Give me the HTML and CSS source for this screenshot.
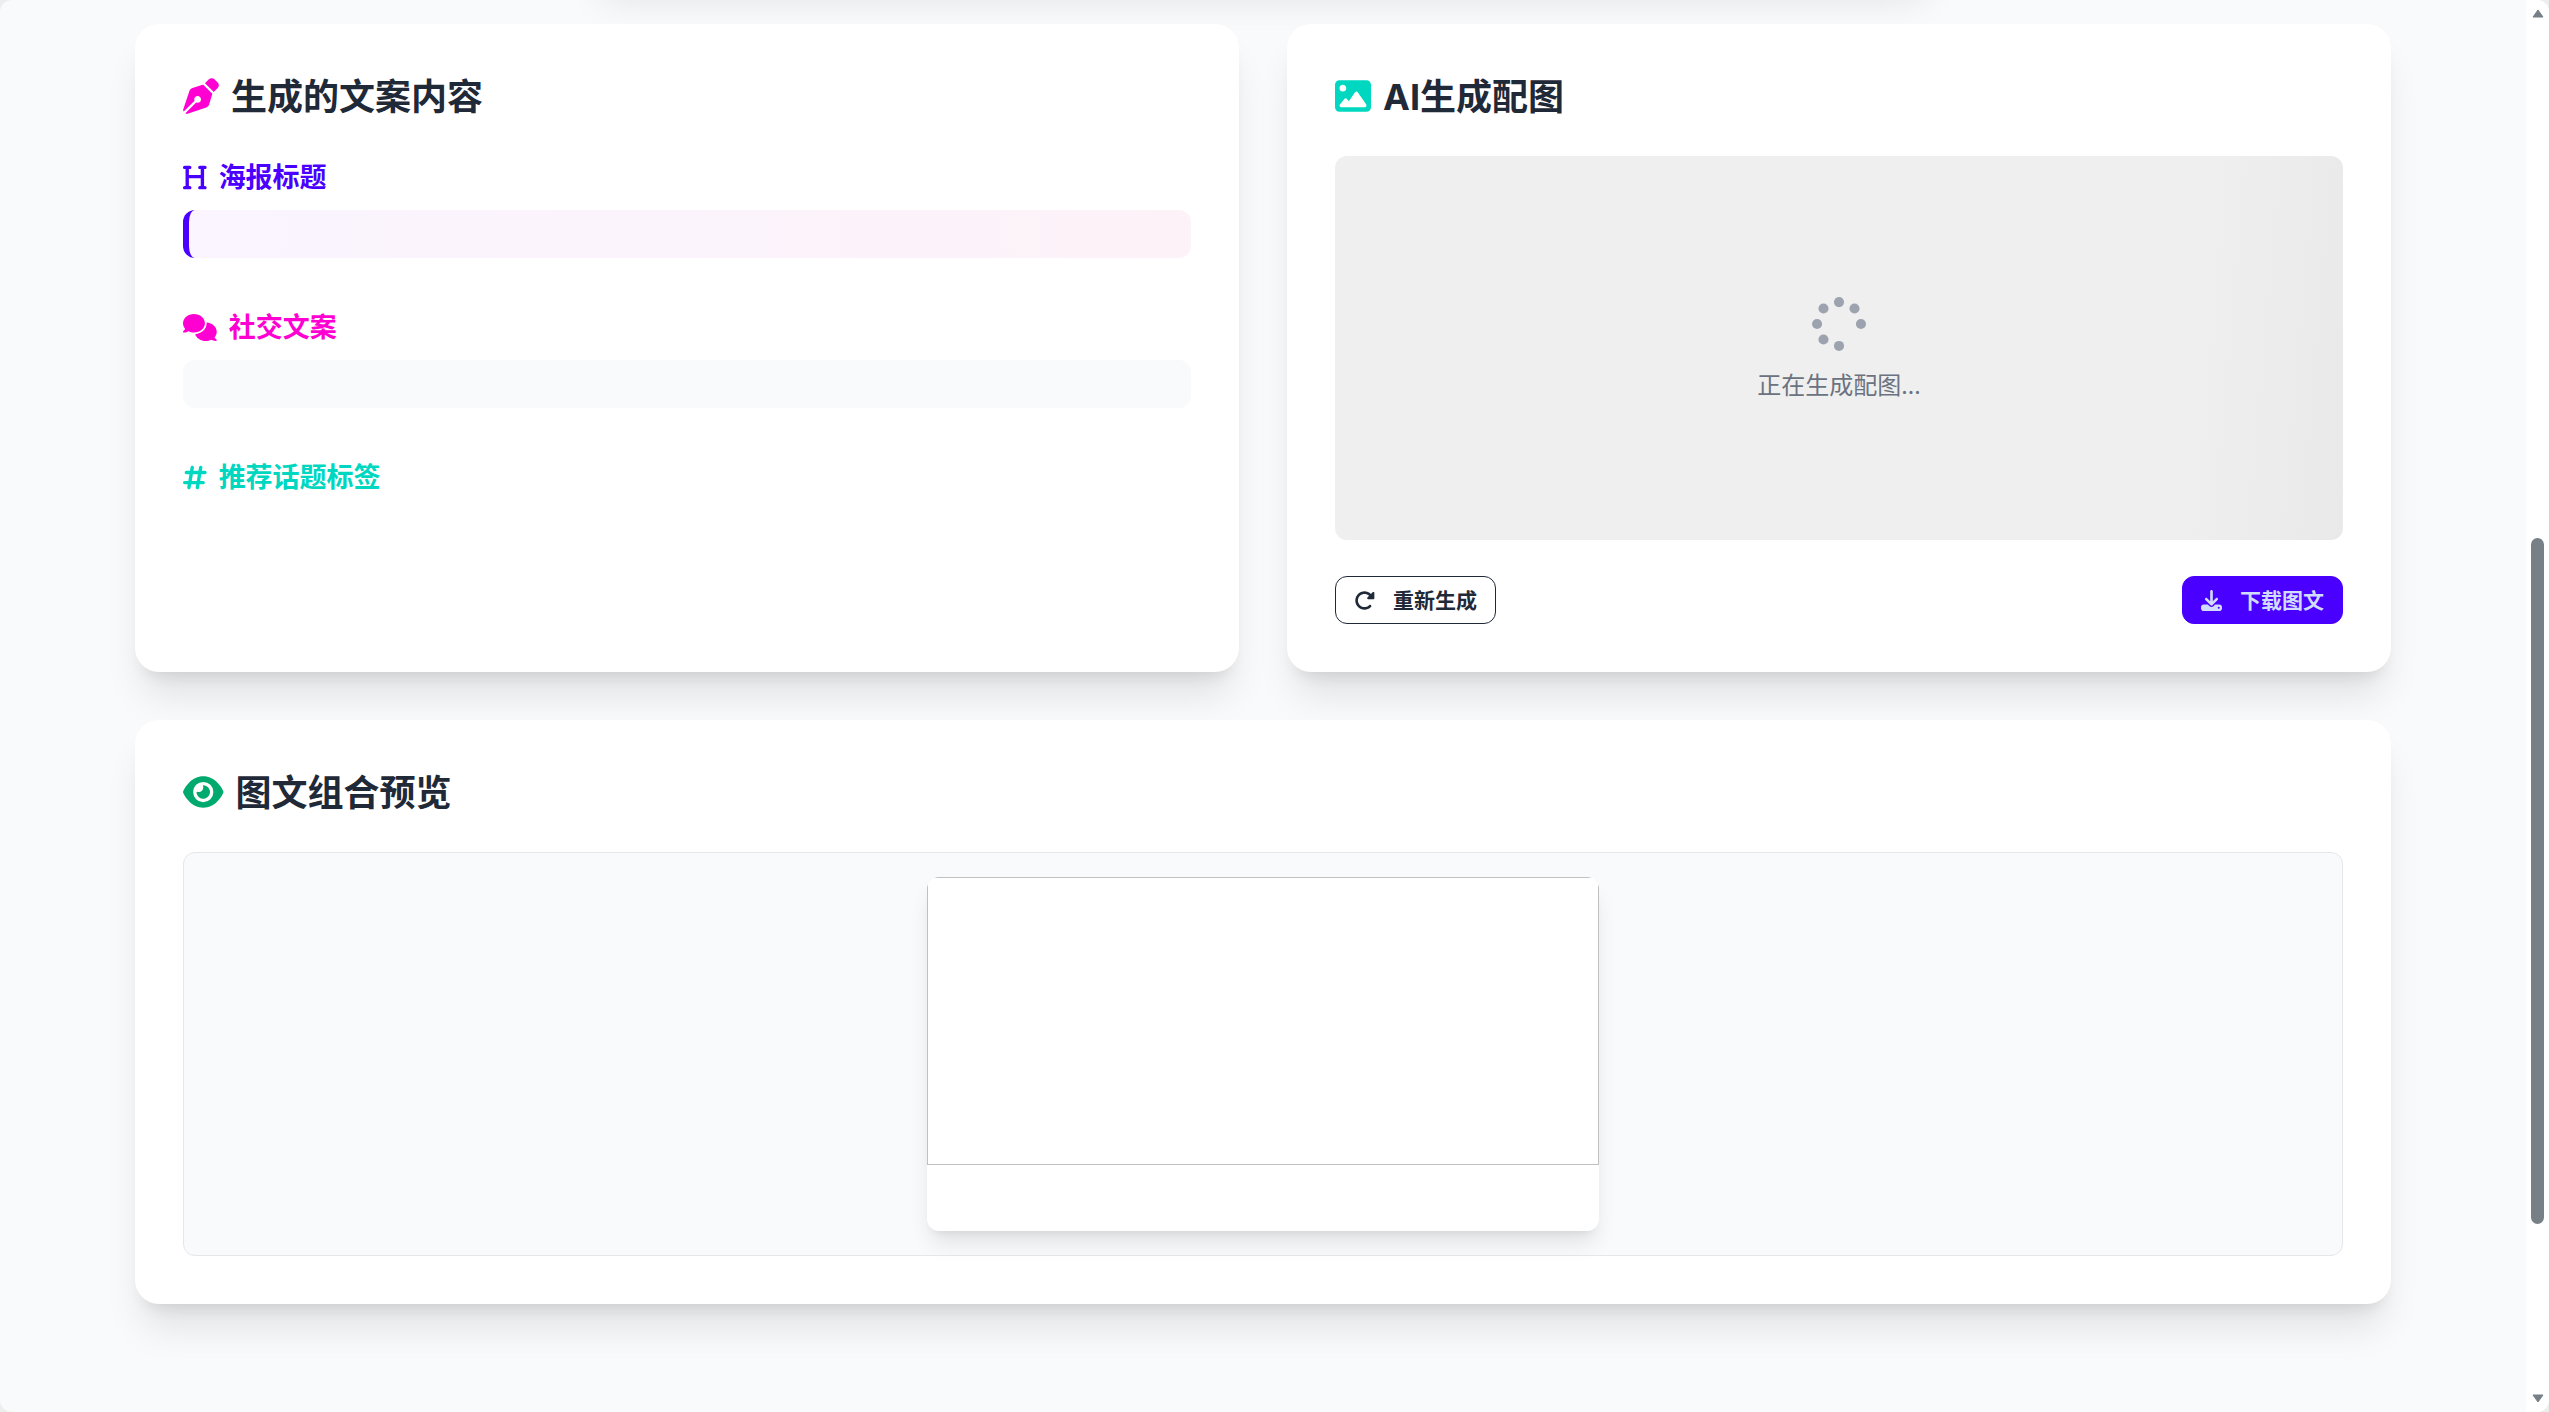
FILE: index.html
```html
<!DOCTYPE html>
<html lang="zh-CN">
<head>
<meta charset="utf-8">
<meta name="viewport" content="width=device-width, initial-scale=1">
<title>AI 图文生成</title>
<link rel="stylesheet" href="styles.css">
</head>
<body>
<div class="window">
  <main class="page">
    <div class="container">
      <div class="form-card"></div>
      <div class="results">
        <section class="card">
          <h2 class="card-title">
            <svg class="icon pink" viewBox="0 0 512 512" aria-hidden="true"><path d="M368.4 18.3L312.7 74.1 437.9 199.3l55.7-55.7c21.9-21.9 21.9-57.3 0-79.2L447.6 18.3c-21.9-21.9-57.3-21.9-79.2 0zM288 94.6l-9.2 2.8L134.7 140.6c-19.9 6-35.7 21.2-42.3 41L3.8 445.8c-3.8 11.3-1 23.9 7.3 32.4L164.7 324.7c-3-6.3-4.7-13.3-4.7-20.7c0-26.5 21.5-48 48-48s48 21.5 48 48s-21.5 48-48 48c-7.4 0-14.4-1.7-20.7-4.7L33.7 500.9c8.6 8.3 21.1 11.2 32.4 7.3l264.3-88.6c19.7-6.6 35-22.4 41-42.3l43.2-144.1 2.7-9.2L288 94.6z"/></svg>
            <span>生成的文案内容</span>
          </h2>
          <div class="block">
            <h3 class="block-title purple">
              <svg class="icon" viewBox="0 0 448 512" aria-hidden="true"><path d="M0 64C0 46.3 14.3 32 32 32H80h48c17.7 0 32 14.3 32 32s-14.3 32-32 32H112V208H336V96H320c-17.7 0-32-14.3-32-32s14.3-32 32-32h48 48c17.7 0 32 14.3 32 32s-14.3 32-32 32H400V240 416h16c17.7 0 32 14.3 32 32s-14.3 32-32 32H368 320c-17.7 0-32-14.3-32-32s14.3-32 32-32h16V272H112V416h16c17.7 0 32 14.3 32 32s-14.3 32-32 32H80 32c-17.7 0-32-14.3-32-32s14.3-32 32-32H48V240 96H32C14.3 96 0 81.7 0 64z"/></svg>
              <span>海报标题</span>
            </h3>
            <div class="field field-title"></div>
          </div>
          <div class="block">
            <h3 class="block-title pink">
              <svg class="icon" viewBox="0 0 640 512" aria-hidden="true"><path d="M208 352c114.9 0 208-78.8 208-176S322.9 0 208 0S0 78.8 0 176c0 38.6 14.7 74.3 39.6 103.4c-3.5 9.4-8.7 17.7-14.2 24.7c-4.8 6.2-9.7 11-13.3 14.3c-1.8 1.6-3.3 2.9-4.3 3.7c-.5 .4-.9 .7-1.1 .8l-.2 .2C1 327.2-1.4 334.4 .8 340.9S9.1 352 16 352c21.8 0 43.8-5.6 62.1-12.5c9.2-3.5 17.8-7.4 25.2-11.4C134.1 343.3 169.8 352 208 352zM448 176c0 112.3-99.1 196.9-216.5 207C255.8 457.4 336.4 512 432 512c38.2 0 73.9-8.7 104.7-23.9c7.5 4 16 7.9 25.2 11.4c18.3 6.9 40.3 12.5 62.1 12.5c6.9 0 13.1-4.5 15.2-11.1c2.1-6.6-.2-13.8-5.8-17.9l-.2-.2c-.2-.2-.6-.4-1.1-.8c-1-.8-2.5-2-4.3-3.7c-3.6-3.3-8.5-8.1-13.3-14.3c-5.5-7-10.7-15.4-14.2-24.7c24.9-29 39.6-64.7 39.6-103.4c0-92.8-84.9-168.9-192.6-175.5c.4 5.1 .6 10.3 .6 15.5z"/></svg>
              <span>社交文案</span>
            </h3>
            <div class="field"></div>
          </div>
          <div class="block">
            <h3 class="block-title teal">
              <svg class="icon" viewBox="0 0 448 512" aria-hidden="true"><path d="M181.3 32.4c17.4 2.9 29.2 19.4 26.3 36.8L197.8 128h95.1l11.5-69.3c2.9-17.4 19.4-29.2 36.8-26.3s29.2 19.4 26.3 36.8L357.8 128H416c17.7 0 32 14.3 32 32s-14.3 32-32 32H347.1L325.8 320H384c17.7 0 32 14.3 32 32s-14.3 32-32 32H315.1l-11.5 69.3c-2.9 17.4-19.4 29.2-36.8 26.3s-29.2-19.4-26.3-36.8l9.8-58.7H155.1l-11.5 69.3c-2.9 17.4-19.4 29.2-36.8 26.3s-29.2-19.4-26.3-36.8L90.2 384H32c-17.7 0-32-14.3-32-32s14.3-32 32-32h68.9l21.3-128H64c-17.7 0-32-14.3-32-32s14.3-32 32-32h68.9l11.5-69.3c2.9-17.4 19.4-29.2 36.8-26.3zM187.1 192L165.8 320h95.1l21.3-128H187.1z"/></svg>
              <span>推荐话题标签</span>
            </h3>
          </div>
        </section>

        <section class="card">
          <h2 class="card-title">
            <svg class="icon teal" viewBox="0 0 512 512" aria-hidden="true"><path d="M0 96C0 60.7 28.7 32 64 32H448c35.3 0 64 28.7 64 64V416c0 35.3-28.7 64-64 64H64c-35.3 0-64-28.7-64-64V96zM323.8 202.5c-4.5-6.6-11.9-10.5-19.8-10.5s-15.4 3.9-19.8 10.5l-87 127.6L170.7 297c-4.6-5.7-11.5-9-18.7-9s-14.2 3.3-18.7 9l-64 80c-5.8 7.2-6.9 17.1-2.9 25.4s12.4 13.6 21.6 13.6h96 32H424c8.9 0 17.1-4.9 21.2-12.8s3.6-17.4-1.4-24.7l-120-176zM112 192c26.5 0 48-21.5 48-48s-21.5-48-48-48s-48 21.5-48 48s21.5 48 48 48z"/></svg>
            <span>AI生成配图</span>
          </h2>
          <div class="placeholder" role="status">
            <svg class="spinner" viewBox="0 0 512 512" aria-hidden="true"><circle cx="256" cy="48" r="48"/><circle cx="403" cy="109" r="48"/><circle cx="464" cy="256" r="48"/><circle cx="256" cy="464" r="48"/><circle cx="109" cy="403" r="48"/><circle cx="48" cy="256" r="48"/><circle cx="109" cy="109" r="48"/></svg>
            <p class="placeholder-text">正在生成配图...</p>
          </div>
          <div class="actions">
            <button type="button" class="btn btn-outline">
              <svg class="icon" viewBox="0 0 512 512" aria-hidden="true"><path d="M463.5 224H472c13.3 0 24-10.7 24-24V72c0-9.7-5.8-18.5-14.8-22.2s-19.3-1.7-26.2 5.2L413.4 96.6c-87.6-86.5-228.7-86.2-315.8 1c-87.5 87.5-87.5 229.3 0 316.8s229.3 87.5 316.8 0c12.5-12.5 12.5-32.8 0-45.3s-32.8-12.5-45.3 0c-62.5 62.5-163.8 62.5-226.3 0s-62.5-163.8 0-226.3c62.2-62.2 162.7-62.5 225.3-1L327 183c-6.9 6.9-8.9 17.2-5.2 26.2s12.5 14.8 22.2 14.8H463.5z"/></svg>
              <span>重新生成</span>
            </button>
            <button type="button" class="btn btn-primary">
              <svg class="icon" viewBox="0 0 512 512" aria-hidden="true"><path d="M288 32c0-17.7-14.3-32-32-32s-32 14.3-32 32V274.7l-73.4-73.4c-12.5-12.5-32.8-12.5-45.3 0s-12.5 32.8 0 45.3l128 128c12.5 12.5 32.8 12.5 45.3 0l128-128c12.5-12.5 12.5-32.8 0-45.3s-32.8-12.5-45.3 0L288 274.7V32zM64 352c-35.3 0-64 28.7-64 64v32c0 35.3 28.7 64 64 64H448c35.3 0 64-28.7 64-64V416c0-35.3-28.7-64-64-64H346.5l-45.3 45.3c-25 25-65.5 25-90.5 0L165.5 352H64zm368 56a24 24 0 1 1 0 48 24 24 0 1 1 0-48z"/></svg>
              <span>下载图文</span>
            </button>
          </div>
        </section>
      </div>

      <section class="card">
        <h2 class="card-title">
          <svg class="icon green" viewBox="0 0 576 512" aria-hidden="true"><path d="M288 32c-80.8 0-145.5 36.8-192.6 80.6C48.6 156 17.3 208 2.5 243.7c-3.3 7.9-3.3 16.7 0 24.6C17.3 304 48.6 356 95.4 399.4C142.5 443.2 207.2 480 288 480s145.5-36.8 192.6-80.6c46.8-43.5 78.1-95.4 93-131.1c3.3-7.9 3.3-16.7 0-24.6c-14.9-35.7-46.2-87.7-93-131.1C433.5 68.8 368.8 32 288 32zM144 256a144 144 0 1 1 288 0 144 144 0 1 1 -288 0zm144-64c0 35.3-28.7 64-64 64c-7.1 0-13.9-1.2-20.3-3.3c-5.5-1.8-11.9 1.6-11.7 7.4c.3 6.9 1.3 13.8 3.2 20.7c13.7 51.2 66.4 81.6 117.6 67.9s81.6-66.4 67.9-117.6c-11.1-41.5-47.8-69.4-88.6-71.1c-5.8-.2-9.2 6.1-7.4 11.7c2.1 6.4 3.3 13.2 3.3 20.3z"/></svg>
          <span>图文组合预览</span>
        </h2>
        <div class="preview">
          <article class="post">
            <div class="post-image"></div>
            <div class="post-body"></div>
          </article>
        </div>
      </section>
    </div>
  </main>
  <div class="scrollbar" aria-hidden="true">
    <svg class="arrow" viewBox="0 0 12 9"><path d="M6 1L11 8H1z"/></svg>
    <div class="track"><div class="thumb"></div></div>
    <svg class="arrow" viewBox="0 0 12 9"><path d="M6 8L1 1H11z"/></svg>
  </div>
</div>
</body>
</html>
```
FILE: styles.css
```css
* {
  box-sizing: border-box;
}

body,
h2,
h3,
p {
  margin: 0;
}

body {
  background: #eceded;
  color: #1f2937;
  font-family: "Noto Sans", "Noto Sans CJK SC", sans-serif;
  font-size: 24px;
  line-height: 36px;
}

.window {
  display: flex;
  height: 100vh;
  overflow: hidden;
  border-radius: 12px;
  background: #f9fafc;
}

.page {
  flex: 1;
  min-width: 0;
  overflow: hidden;
}

.container {
  display: flex;
  flex-direction: column;
  gap: 48px;
  max-width: 2304px;
  margin: 0 auto;
  padding: 0 24px;
}

/* Input form, scrolled out above the results */
.form-card {
  width: 100%;
  max-width: 1344px;
  height: 120px;
  margin: -144px auto 0;
  border-radius: 24px;
  background: #fff;
  box-shadow: 0 30px 38px -8px rgba(0, 0, 0, 0.1), 0 12px 15px -9px rgba(0, 0, 0, 0.1);
}

.results {
  display: grid;
  grid-template-columns: 1fr 1fr;
  gap: 48px;
}

.card {
  padding: 48px;
  border-radius: 24px;
  background: #fff;
  box-shadow: 0 30px 38px -8px rgba(0, 0, 0, 0.1), 0 12px 15px -9px rgba(0, 0, 0, 0.1);
}

.icon {
  flex: none;
  height: 1em;
  fill: currentColor;
}

.card-title,
.block-title {
  display: flex;
  align-items: center;
  gap: 12px;
  font-family: Inter, "Noto Sans CJK SC", sans-serif;
  font-weight: 700;
}

.card-title span,
.block-title span {
  padding-top: 2px;
}

.card-title {
  height: 48px;
  margin-bottom: 36px;
  font-size: 36px;
  line-height: 48px;
}

.block-title {
  height: 42px;
  margin-bottom: 12px;
  font-size: 27px;
  line-height: 42px;
}

.block + .block {
  margin-top: 48px;
}

.purple { color: #4a00ff; }
.pink { color: #ff00d3; }
.teal { color: #00d7c0; }
.green { color: #00a96e; }

.field {
  min-height: 48px;
  padding: 24px;
  border-radius: 12px;
  background: #f9fafc;
}

.field-title {
  border-left: 6px solid #4a00ff;
  background: linear-gradient(90deg, #faf5ff, #fdf2f8);
}

.placeholder {
  display: flex;
  flex-direction: column;
  align-items: center;
  justify-content: center;
  gap: 16px;
  height: 384px;
  padding-top: 4px;
  border-radius: 12px;
  background: linear-gradient(95deg, #efefef 84%, #e9e9e9);
}

.spinner {
  width: 54px;
  height: 54px;
  fill: #9ca3af;
}

.placeholder-text {
  color: #6b7280;
}

.actions {
  display: flex;
  justify-content: space-between;
  margin-top: 36px;
}

.btn {
  display: flex;
  align-items: center;
  gap: 18px;
  height: 48px;
  padding: 0 18px;
  border: 1px solid #1f2937;
  border-radius: 12px;
  background: transparent;
  color: #1f2937;
  font: inherit;
  font-size: 21px;
  font-weight: 600;
  line-height: 24px;
}

.btn-primary {
  border-color: #4a00ff;
  background: #4a00ff;
  color: #d1dbff;
}

.preview {
  padding: 24px;
  border: 1px solid #e5e7eb;
  border-radius: 12px;
  background: #f9fafc;
}

.post {
  max-width: 672px;
  margin: 0 auto;
  overflow: hidden;
  border-radius: 12px;
  background: #fff;
  box-shadow: 0 15px 22px -4px rgba(0, 0, 0, 0.1), 0 6px 9px -6px rgba(0, 0, 0, 0.1);
}

.post-image {
  height: 288px;
  border: 1px solid #c0c0c0;
}

.post-body {
  min-height: 66px;
  padding: 24px;
}

.scrollbar {
  display: flex;
  flex-direction: column;
  align-items: center;
  gap: 8px;
  width: 23px;
  padding: 9px 0;
  background: #fff;
}

.arrow {
  flex: none;
  width: 12px;
  height: 9px;
  fill: #788087;
  stroke: #788087;
  stroke-linejoin: round;
}

.track {
  display: flex;
  flex: 1;
  flex-direction: column;
}

.track::before {
  flex: 512;
  content: "";
}

.track::after {
  flex: 162;
  content: "";
}

.thumb {
  flex: 686;
  width: 13px;
  border-radius: 7px;
  background: #788087;
}
```
